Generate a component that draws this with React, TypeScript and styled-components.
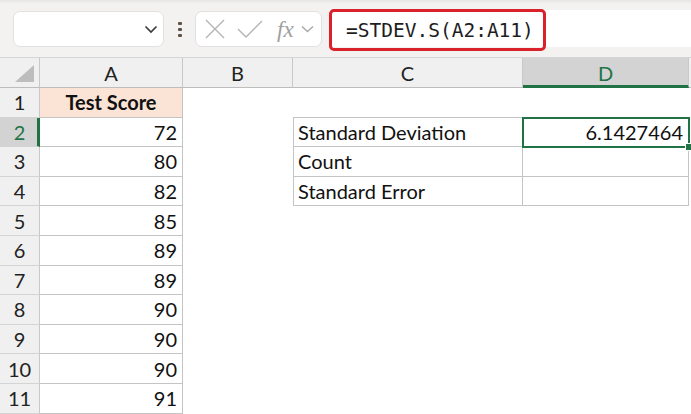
import React from 'react';
import styled, { createGlobalStyle } from 'styled-components';

const GREEN = '#217346';
const GRID = '#c4c4c4';
const ROW_H = 29.6;

const GlobalStyle = createGlobalStyle`
  html, body {
    margin: 0;
    padding: 0;
    background: #ffffff;
    overflow: hidden;
  }
  body {
    font-family: Lato, "Liberation Sans", sans-serif;
  }
`;

const scores = [72, 80, 82, 85, 89, 89, 90, 90, 90, 91];
const columns = ['A', 'B', 'C', 'D', ''];

export default function App() {
  return (
    <>
      <GlobalStyle />
      <Page>
        <Toolbar>
          <NameBox>
            <svg width="14" height="9" viewBox="0 0 14 9">
              <path d="M1.5 1.5 L7 7 L12.5 1.5" fill="none" stroke="#3c3c3c" strokeWidth="1.7" />
            </svg>
          </NameBox>
          <Dots>
            <span />
            <span />
            <span />
          </Dots>
          <ButtonsBox>
            <svg width="22" height="22" viewBox="0 0 22 22">
              <path d="M2 2 L20 20 M20 2 L2 20" stroke="#b4b4b4" strokeWidth="1.4" />
            </svg>
            <svg width="26" height="20" viewBox="0 0 26 20">
              <path d="M1 10 L9 18 L25 2" fill="none" stroke="#b4b4b4" strokeWidth="1.4" />
            </svg>
            <Fx>fx</Fx>
            <svg width="13" height="8" viewBox="0 0 13 8">
              <path d="M1 1.5 L6.5 6.5 L12 1.5" fill="none" stroke="#a8a8a8" strokeWidth="1.4" />
            </svg>
          </ButtonsBox>
          <FormulaBar>
            <Highlight>=STDEV.S(A2:A11)</Highlight>
          </FormulaBar>
        </Toolbar>

        <Sheet>
          <Corner>
            <svg width="20" height="18" viewBox="0 0 20 18">
              <path d="M19 0 L19 17 L0 17 Z" fill="#bdbdbd" />
            </svg>
          </Corner>
          {columns.map((c) => (
            <ColHeader key={c || 'E'} $active={c === 'D'}>
              {c}
            </ColHeader>
          ))}

          {Array.from({ length: 11 }).map((_, i) => {
            const row = i + 1;
            const tableRow = row >= 2 && row <= 4;
            const labels: Record<number, string> = {
              2: 'Standard Deviation',
              3: 'Count',
              4: 'Standard Error',
            };
            return (
              <React.Fragment key={row}>
                <RowHeader $active={row === 2}>{row}</RowHeader>
                {row === 1 ? (
                  <TitleCell>Test Score</TitleCell>
                ) : (
                  <Cell $boxed $align="right">
                    {scores[row - 2]}
                  </Cell>
                )}
                <Cell />
                <Cell $boxed={tableRow} $top={row === 2} $left={tableRow}>
                  {labels[row]}
                </Cell>
                {row === 2 ? (
                  <Cell $boxed $top $align="right" $selected>
                    6.1427464
                    <FillHandle />
                  </Cell>
                ) : (
                  <Cell $boxed={tableRow} />
                )}
                <Cell />
              </React.Fragment>
            );
          })}
        </Sheet>
      </Page>
    </>
  );
}

const Page = styled.div`
  width: 691px;
  height: 414px;
  overflow: hidden;
  display: flex;
  flex-direction: column;
`;

const Toolbar = styled.div`
  height: 58px;
  flex-shrink: 0;
  display: flex;
  align-items: flex-start;
  padding-left: 13px;
  background: linear-gradient(#e6e5e4 0, #f3f2f1 4px, #f3f2f1 100%);
  border-bottom: 1px solid #d6d6d6;
  box-sizing: border-box;
`;

const NameBox = styled.div`
  margin-top: 11px;
  width: 151px;
  height: 36px;
  box-sizing: border-box;
  background: #ffffff;
  border: 1px solid #e1e1e1;
  border-radius: 7px;
  display: flex;
  align-items: center;
  justify-content: flex-end;
  padding-right: 5px;
`;

const Dots = styled.div`
  margin: 22px 13px 0 14px;
  width: 4px;
  display: flex;
  flex-direction: column;
  gap: 3px;

  span {
    width: 4px;
    height: 3px;
    border-radius: 1px;
    background: #5e5246;
  }
`;

const ButtonsBox = styled.div`
  margin-top: 11px;
  width: 127px;
  height: 36px;
  box-sizing: border-box;
  background: #ffffff;
  border: 1px solid #e1e1e1;
  border-radius: 7px;
  display: flex;
  align-items: center;
  padding-left: 8px;
  gap: 11px;
`;

const Fx = styled.span`
  font-family: "Liberation Serif", serif;
  font-style: italic;
  font-size: 23px;
  color: #a0a0a0;
  margin-left: 3px;
  margin-right: -4px;
  line-height: 1;
`;

const FormulaBar = styled.div`
  margin-top: 10px;
  margin-left: 7px;
  flex: 1;
  height: 37px;
  background: #ffffff;
  display: flex;
  align-items: flex-start;
`;

const Highlight = styled.div`
  margin-top: -1px;
  width: 217px;
  height: 42px;
  box-sizing: border-box;
  border: 3px solid #d9222c;
  border-radius: 5px;
  display: flex;
  align-items: center;
  padding-left: 14px;
  font-family: "DejaVu Sans Mono", "Liberation Mono", monospace;
  font-size: 19.5px;
  color: #1e1e1e;
`;

const Sheet = styled.div`
  display: grid;
  grid-template-columns: 40px 143px 110px 230px 166px 1fr;
  grid-template-rows: 30px repeat(11, ${ROW_H}px);
  font-size: 20px;
  color: #111111;
`;

const Corner = styled.div`
  background: #f0f0f0;
  border-right: 1px solid #c8c8c8;
  border-bottom: 1px solid #bdbdbd;
  display: flex;
  align-items: flex-end;
  justify-content: flex-end;
  padding: 0 4px 4px 0;
`;

const ColHeader = styled.div<{ $active?: boolean }>`
  background: ${(p) => (p.$active ? '#d3d3d3' : '#f0f0f0')};
  color: ${(p) => (p.$active ? GREEN : '#222222')};
  border-right: 1px solid #c8c8c8;
  border-bottom: ${(p) => (p.$active ? `3px solid ${GREEN}` : '1px solid #bdbdbd')};
  display: flex;
  align-items: center;
  justify-content: center;
  padding-top: ${(p) => (p.$active ? '2px' : '0')};
  font-size: 20px;
`;

const RowHeader = styled.div<{ $active?: boolean }>`
  background: ${(p) => (p.$active ? '#d3d3d3' : '#f0f0f0')};
  color: ${(p) => (p.$active ? GREEN : '#222222')};
  border-right: ${(p) => (p.$active ? `3px solid ${GREEN}` : '1px solid #c8c8c8')};
  border-bottom: 1px solid #d4d4d4;
  display: flex;
  align-items: center;
  justify-content: center;
  padding-left: ${(p) => (p.$active ? '2px' : '0')};
  font-size: 20px;
`;

const Cell = styled.div<{
  $boxed?: boolean;
  $top?: boolean;
  $left?: boolean;
  $align?: 'left' | 'right';
  $selected?: boolean;
}>`
  position: relative;
  z-index: ${(p) => (p.$selected ? 2 : 0)};
  display: flex;
  align-items: center;
  justify-content: ${(p) => (p.$align === 'right' ? 'flex-end' : 'flex-start')};
  padding: 0 5px 0 4px;
  white-space: nowrap;
  background: #ffffff;
  border-right: ${(p) => (p.$boxed ? `1px solid ${GRID}` : 'none')};
  border-bottom: ${(p) => (p.$boxed ? `1px solid ${GRID}` : 'none')};
  border-top: ${(p) => (p.$top ? `1px solid ${GRID}` : 'none')};
  border-left: ${(p) => (p.$left ? `1px solid ${GRID}` : 'none')};
  margin-top: ${(p) => (p.$top ? '-1px' : '0')};

  ${(p) =>
    p.$selected &&
    `
    &::after {
      content: '';
      position: absolute;
      inset: -1px -2px -2px -1px;
      border: 2px solid ${GREEN};
      pointer-events: none;
    }
  `}
`;

const TitleCell = styled.div`
  background: #fbe4d6;
  border-right: 1px solid ${GRID};
  border-bottom: 1px solid ${GRID};
  display: flex;
  align-items: center;
  justify-content: center;
  font-weight: bold;
`;

const FillHandle = styled.span`
  position: absolute;
  right: -5px;
  bottom: -5px;
  width: 6px;
  height: 6px;
  background: ${GREEN};
  border: 1px solid #ffffff;
  z-index: 3;
`;
